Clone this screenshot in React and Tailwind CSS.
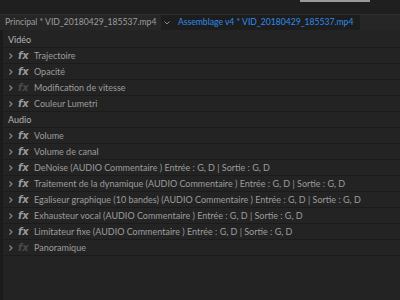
import React from "react";

const video = [
  { name: "Trajectoire" },
  { name: "Opacité" },
  { name: "Modification de vitesse", off: true },
  { name: "Couleur Lumetri" },
];

const audio = [
  { name: "Volume" },
  { name: "Volume de canal" },
  { name: "DeNoise (AUDIO Commentaire ) Entrée : G, D | Sortie : G, D" },
  { name: "Traitement de la dynamique (AUDIO Commentaire ) Entrée : G, D | Sortie : G, D" },
  { name: "Egaliseur graphique (10 bandes) (AUDIO Commentaire ) Entrée : G, D | Sortie : G, D" },
  { name: "Exhausteur vocal (AUDIO Commentaire ) Entrée : G, D | Sortie : G, D" },
  { name: "Limitateur fixe (AUDIO Commentaire ) Entrée : G, D | Sortie : G, D" },
  { name: "Panoramique", off: true },
];

function Chevron() {
  return (
    <svg width="6" height="8" viewBox="0 0 6 8" className="shrink-0">
      <path d="M1.5 1.5 L4 4 L1.5 6.5" fill="none" stroke="#8a8a8a" strokeWidth="1.1" />
    </svg>
  );
}

function Row({ name, off }) {
  return (
    <div className="h-4 flex items-center border-b border-[#1b1b1b] pl-[5px]">
      <Chevron />
      <span
        className={
          "ml-[4px] w-[9px] italic font-semibold text-[10px] leading-none font-['DejaVu_Sans',sans-serif] " +
          (off ? "text-[#4a4a4a]" : "text-[#9a9a9a]")
        }
      >
        fx
      </span>
      <span className="ml-[7px] whitespace-nowrap text-[#9d9d9d]">{name}</span>
    </div>
  );
}

function Section({ title }) {
  return (
    <div className="h-4 flex items-center border-b border-[#1b1b1b] pl-[5px] text-[#b4b4b4]">
      {title}
    </div>
  );
}

export default function App() {
  return (
    <div className="w-[400px] h-[300px] overflow-hidden bg-[#232323] text-[9px] font-['Lato',sans-serif] flex flex-col">
      {/* top strip with scrollbar thumb */}
      <div className="h-[14px] bg-[#1f1f1f] relative shrink-0">
        <div className="absolute left-[300px] top-0 w-[70px] h-[2px] bg-[#9a9a9a]" />
      </div>
      {/* tabs */}
      <div className="h-[16px] bg-[#262626] border-t border-[#2e2e2e] flex items-center shrink-0 text-[8.6px]">
        <span className="w-[161px] shrink-0 pl-[5px] text-[#9d9d9d] whitespace-nowrap">
          Principal * VID_20180429_185537.mp4
        </span>
        <div className="w-[199px] shrink-0 h-full bg-[#1d1d1d] flex items-center">
          <svg width="8" height="6" viewBox="0 0 8 6" className="ml-[2px] shrink-0">
            <path d="M1.5 1.5 L4 4 L6.5 1.5" fill="none" stroke="#8a8a8a" strokeWidth="1" />
          </svg>
          <span className="ml-[7px] text-[#2d8ceb] whitespace-nowrap">Assemblage v4 * VID_20180429_185537.mp4</span>
        </div>
      </div>
      <div className="flex-1 border-l-[3px] border-[#1b1b1b] pt-[2px]">
        <Section title="Vidéo" />
        {video.map((r) => (
          <Row key={r.name} {...r} />
        ))}
        <Section title="Audio" />
        {audio.map((r) => (
          <Row key={r.name} {...r} />
        ))}
      </div>
    </div>
  );
}
